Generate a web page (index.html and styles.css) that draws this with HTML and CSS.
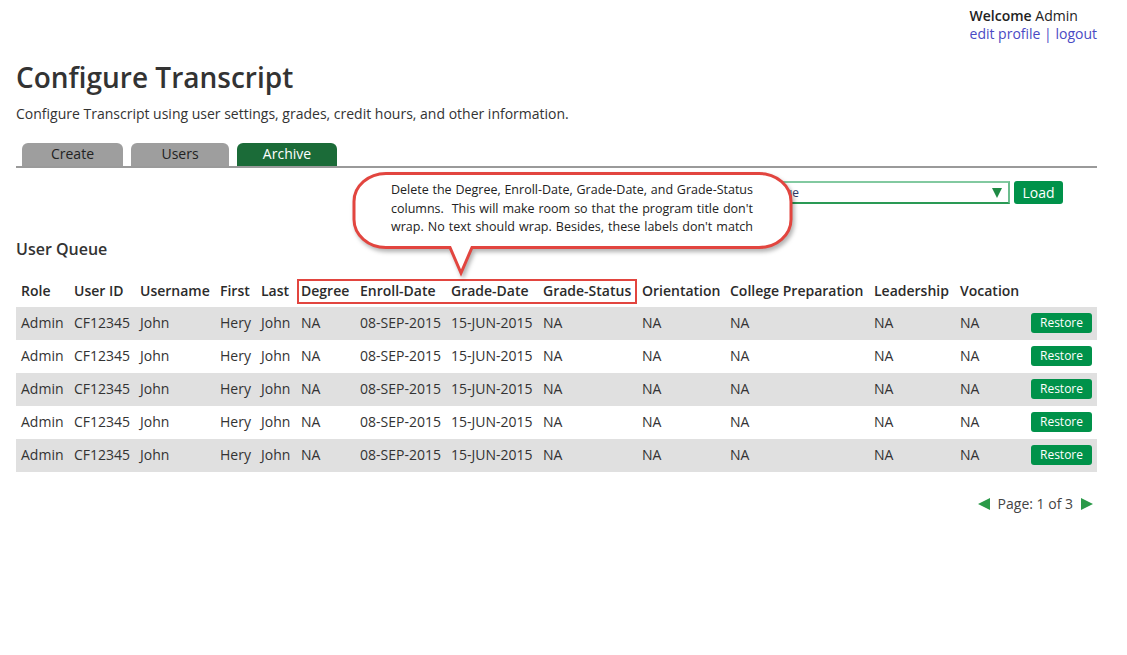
FILE: index.html
```html
<!DOCTYPE html>
<html>
<head>
<meta charset="utf-8">
<title>Configure Transcript</title>
<link rel="stylesheet" href="styles.css">
</head>
<body>
<div class="page">
  <div class="topbar">
    <div class="welcome">
      <div><b>Welcome</b> Admin</div>
      <div class="links"><a href="#">edit profile</a> | <a href="#">logout</a></div>
    </div>
  </div>

  <h1 class="title">Configure Transcript</h1>
  <p class="lead">Configure Transcript using user settings, grades, credit hours, and other information.</p>

  <div class="tabs">
    <div class="tab tab-create">Create</div>
    <div class="tab tab-users">Users</div>
    <div class="tab tab-archive active">Archive</div>
  </div>

  <div class="loadrow">
    <div class="select">
      <span class="select-text">Select Archive Queue</span>
      <svg class="select-arrow" width="10" height="10" viewBox="0 0 10 10"><polygon points="0,0 10,0 5,10" fill="#1f8a45"/></svg>
    </div>
    <button class="btn load">Load</button>
  </div>

  <h2 class="section">User Queue</h2>

  <div class="tablewrap">
    <table class="queue">
      <colgroup>
        <col class="c-role"><col class="c-uid"><col class="c-uname"><col class="c-first"><col class="c-last">
        <col class="c-degree"><col class="c-enroll"><col class="c-gdate"><col class="c-gstatus">
        <col class="c-orient"><col class="c-college"><col class="c-lead"><col class="c-voc"><col class="c-act">
      </colgroup>
      <thead>
        <tr>
          <th>Role</th><th>User ID</th><th>Username</th><th>First</th><th>Last</th>
          <th>Degree</th><th>Enroll-Date</th><th>Grade-Date</th><th>Grade-Status</th>
          <th>Orientation</th><th>College Preparation</th><th>Leadership</th><th>Vocation</th><th></th>
        </tr>
      </thead>
      <tbody>
        <tr><td>Admin</td><td>CF12345</td><td>John</td><td>Hery</td><td>John</td><td>NA</td><td>08-SEP-2015</td><td>15-JUN-2015</td><td>NA</td><td>NA</td><td>NA</td><td>NA</td><td>NA</td><td><button class="btn restore">Restore</button></td></tr>
        <tr><td>Admin</td><td>CF12345</td><td>John</td><td>Hery</td><td>John</td><td>NA</td><td>08-SEP-2015</td><td>15-JUN-2015</td><td>NA</td><td>NA</td><td>NA</td><td>NA</td><td>NA</td><td><button class="btn restore">Restore</button></td></tr>
        <tr><td>Admin</td><td>CF12345</td><td>John</td><td>Hery</td><td>John</td><td>NA</td><td>08-SEP-2015</td><td>15-JUN-2015</td><td>NA</td><td>NA</td><td>NA</td><td>NA</td><td>NA</td><td><button class="btn restore">Restore</button></td></tr>
        <tr><td>Admin</td><td>CF12345</td><td>John</td><td>Hery</td><td>John</td><td>NA</td><td>08-SEP-2015</td><td>15-JUN-2015</td><td>NA</td><td>NA</td><td>NA</td><td>NA</td><td>NA</td><td><button class="btn restore">Restore</button></td></tr>
        <tr><td>Admin</td><td>CF12345</td><td>John</td><td>Hery</td><td>John</td><td>NA</td><td>08-SEP-2015</td><td>15-JUN-2015</td><td>NA</td><td>NA</td><td>NA</td><td>NA</td><td>NA</td><td><button class="btn restore">Restore</button></td></tr>
      </tbody>
    </table>
    <div class="mark"></div>
  </div>

  <div class="pager">
    <svg class="pg-arrow" width="12" height="12" viewBox="0 0 12 12"><polygon points="12,0 12,12 0,6" fill="#2a9a48"/></svg>
    <span class="pg-text">Page: 1 of 3</span>
    <svg class="pg-arrow" width="12" height="12" viewBox="0 0 12 12"><polygon points="0,0 0,12 12,6" fill="#2a9a48"/></svg>
  </div>

  <div class="callout">
    <svg class="callout-shape" width="452" height="110" viewBox="0 0 452 110">
      <path d="M 36 3.5 H 409 A 32 28 0 0 1 441 31.5 V 49.5 A 32 28 0 0 1 409 77.5 H 122 L 111 103 L 100 77.5 H 36 A 32 28 0 0 1 4 49.5 V 31.5 A 32 28 0 0 1 36 3.5 Z" fill="#ffffff" stroke="#e2453f" stroke-width="3" stroke-linejoin="miter"/>
    </svg>
    <div class="callout-text">
      <span class="cl">Delete the Degree, Enroll-Date, Grade-Date, and Grade-Status</span>
      <span class="cl">columns.&nbsp; This will make room so that the program title don't</span>
      <span class="cl">wrap. No text should wrap. Besides, these labels don't match</span>
    </div>
  </div>
</div>
</body>
</html>
```

FILE: styles.css
```css
* { box-sizing: border-box; }

html, body {
  margin: 0;
  padding: 0;
  background: #ffffff;
}

body {
  font-family: "Open Sans", "Liberation Sans", sans-serif;
  font-size: 14px;
  color: #333333;
}

.page {
  position: relative;
  padding: 7px 30px 0 16px;
}

/* top bar */
.topbar {
  display: flex;
  justify-content: flex-end;
}

.welcome {
  line-height: 18px;
  font-size: 14px;
  color: #222;
}

.welcome b { font-weight: 600; }

.links { color: #4a4ac4; }

.links a {
  color: #4a4ac4;
  text-decoration: none;
}

/* title */
.title {
  margin: 16px 0 0 0;
  font-size: 28px;
  line-height: 36px;
  font-weight: 600;
  color: #333;
}

.lead {
  margin: 9px 0 0 0;
  font-size: 14px;
  line-height: 20px;
}

/* tabs */
.tabs {
  display: flex;
  gap: 8px;
  margin-top: 19px;
  padding-left: 6px;
  border-bottom: 2px solid #9a9a9a;
}

.tab {
  height: 23px;
  line-height: 21px;
  text-align: center;
  font-size: 14px;
  color: #222;
  background: #9e9e9e;
  border-radius: 6px 6px 0 0;
}

.tab-create { width: 101px; }
.tab-users { width: 98px; }
.tab-archive { width: 100px; }

.tab.active {
  background: #1b6b38;
  color: #ffffff;
}

/* load row */
.loadrow {
  display: flex;
  justify-content: flex-end;
  gap: 4px;
  margin-top: 13px;
  padding-right: 34px;
}

.select {
  position: relative;
  width: 370px;
  height: 23px;
  border: 2px solid #82c9a0;
  border-bottom-color: #2a9a55;
  border-right-color: #6bbd8e;
  display: flex;
  align-items: center;
  justify-content: space-between;
  padding: 0 6px 0 6px;
  font-size: 12px;
  color: #2f3a6a;
}

.select-text {
  width: 151px;
  text-align: right;
  white-space: nowrap;
  overflow: hidden;
}

.select-arrow { display: block; }

.btn {
  font-family: "Open Sans", "Liberation Sans", sans-serif;
  border: none;
  color: #ffffff;
  background: #00924a;
  border-radius: 3px;
  cursor: pointer;
  padding: 0;
}

.load {
  width: 49px;
  height: 23px;
  font-size: 14px;
  line-height: 23px;
}

/* section */
.section {
  margin: 34px 0 0 0;
  font-size: 16px;
  line-height: 22px;
  font-weight: 600;
  color: #333;
}

/* table */
.tablewrap {
  position: relative;
  margin-top: 14px;
}

.queue {
  width: 1081px;
  table-layout: fixed;
  border-collapse: collapse;
  border-spacing: 0;
}

.queue th,
.queue td {
  padding: 0 5px;
  height: 33px;
  line-height: 20px;
  white-space: nowrap;
  text-align: left;
  vertical-align: middle;
  font-size: 14px;
}

.queue th {
  font-weight: 600;
  color: #2b2b2b;
  padding-top: 1px;
}

.queue td { color: #333; }

.queue tbody td { padding-bottom: 1px; }

.queue tbody tr:nth-child(odd) { background: #e0e0e0; }

.c-role { width: 53px; }
.c-uid { width: 66px; }
.c-uname { width: 80px; }
.c-first { width: 41px; }
.c-last { width: 40px; }
.c-degree { width: 59px; }
.c-enroll { width: 91px; }
.c-gdate { width: 92px; }
.c-gstatus { width: 99px; }
.c-orient { width: 88px; }
.c-college { width: 144px; }
.c-lead { width: 86px; }
.c-voc { width: 71px; }
.c-act { width: 71px; }

.restore {
  display: block;
  width: 61px;
  height: 20px;
  font-size: 12px;
  line-height: 20px;
}

.mark {
  position: absolute;
  left: 281px;
  top: 5px;
  width: 340px;
  height: 25px;
  border: 2px solid #e2453f;
}

/* pager */
.pager {
  display: flex;
  justify-content: flex-end;
  align-items: center;
  gap: 8px;
  margin-top: 22px;
  padding-right: 4px;
  line-height: 20px;
  color: #444;
}

.pg-arrow { display: block; }

/* callout */
.callout {
  position: absolute;
  left: 350px;
  top: 170px;
  width: 452px;
  height: 110px;
}

.callout-shape {
  display: block;
  filter: drop-shadow(2px 3px 2px rgba(0, 0, 0, 0.3));
}

.callout-text {
  position: absolute;
  left: 41px;
  top: 11px;
  width: 362px;
  font-size: 12.5px;
  line-height: 18.5px;
  color: #222;
}

.cl {
  display: block;
  white-space: nowrap;
  text-align: justify;
  text-align-last: justify;
}
```
